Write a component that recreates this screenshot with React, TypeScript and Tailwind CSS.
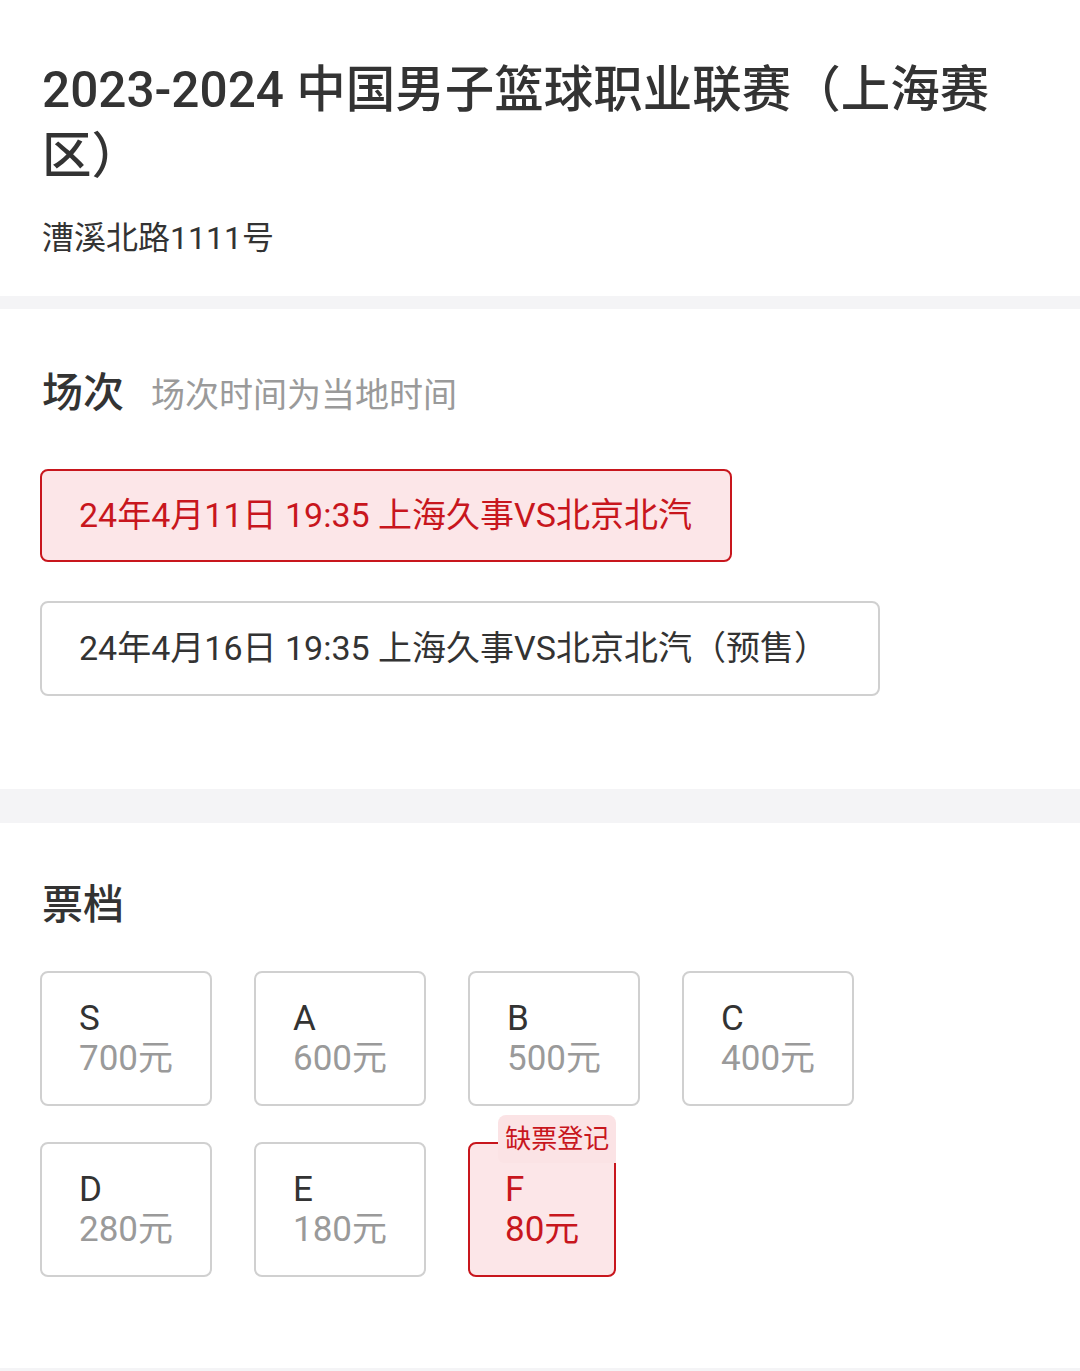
import React from "react";

const FONT = { fontFamily: 'Roboto, "Noto Sans CJK SC", sans-serif' };

const tiers = [
  [
    { n: "S", p: "700元" },
    { n: "A", p: "600元" },
    { n: "B", p: "500元" },
    { n: "C", p: "400元" },
  ],
  [
    { n: "D", p: "280元" },
    { n: "E", p: "180元" },
    { n: "F", p: "80元", active: true },
  ],
];

export default function App() {
  return (
    <div className="w-[1080px] min-h-[1371px] flex flex-col bg-white text-[#333333]" style={FONT}>
      <div className="pl-[42px] pr-[50px] pt-[57px] pb-[36px]">
        <h1 className="text-[49.5px] leading-[66px] font-medium text-[#333333]">
          2023-2024 中国男子篮球职业联赛（上海赛区）
        </h1>
        <div className="mt-[27px] text-[32px] leading-[44px] text-[#333333]">漕溪北路1111号</div>
      </div>
      <div className="h-[13px] bg-[#f4f4f6]" />

      <div className="px-[40px] pt-[59px] pb-[93px]">
        <div className="flex items-baseline pl-[2px]">
          <span className="text-[41px] leading-[50px] font-medium text-[#333333]">场次</span>
          <span className="ml-[27px] text-[34px] leading-[50px] text-[#9a9a9a]">场次时间为当地时间</span>
        </div>
        <div className="mt-[49px] flex flex-col items-start gap-[39px]">
          <div className="h-[93px] flex items-center pl-[37px] pr-[38px] rounded-[8px] border-2 border-[#c8161d] bg-[#fce6e8] text-[34px] text-[#c8161d]">
            24年4月11日 19:35 上海久事VS北京北汽
          </div>
          <div className="h-[95px] flex items-center pl-[37px] pr-[50px] rounded-[8px] border-2 border-[#d0d0d0] bg-white text-[34px] text-[#333333]">
            24年4月16日 19:35 上海久事VS北京北汽（预售）
          </div>
        </div>
      </div>
      <div className="h-[34px] bg-[#f4f4f6]" />

      <div className="flex-1 px-[40px] pt-[57px] pb-[60px]">
        <div className="pl-[2px] text-[41px] leading-[50px] font-medium text-[#333333]">票档</div>
        <div className="mt-[41px] flex flex-col gap-[36px]">
          {tiers.map((row, i) => (
            <div key={i} className="flex gap-[42px]">
              {row.map((t) =>
                t.active ? (
                  <div key={t.n} className="relative">
                    <div className="h-[135px] px-[35px] pt-[26px] rounded-[8px] border-2 border-[#c8161d] bg-[#fce6e8]">
                      <div className="text-[35px] leading-[40px] text-[#c8161d]">{t.n}</div>
                      <div className="text-[35px] leading-[40px] text-[#c8161d]">{t.p}</div>
                    </div>
                    <div className="absolute right-0 top-[-27px] h-[48px] px-[7px] flex items-center rounded-t-[8px] rounded-bl-[6px] bg-[#fbe3e5] text-[26px] text-[#c8161d]">
                      缺票登记
                    </div>
                  </div>
                ) : (
                  <div key={t.n} className="h-[135px] px-[37px] pt-[26px] rounded-[8px] border-2 border-[#d0d0d0] bg-white">
                    <div className="text-[35px] leading-[40px] text-[#333333]">{t.n}</div>
                    <div className="text-[35px] leading-[40px] text-[#9a9a9a]">{t.p}</div>
                  </div>
                )
              )}
            </div>
          ))}
        </div>
      </div>
      <div className="h-[3px] bg-[#f4f4f6]" />
    </div>
  );
}
